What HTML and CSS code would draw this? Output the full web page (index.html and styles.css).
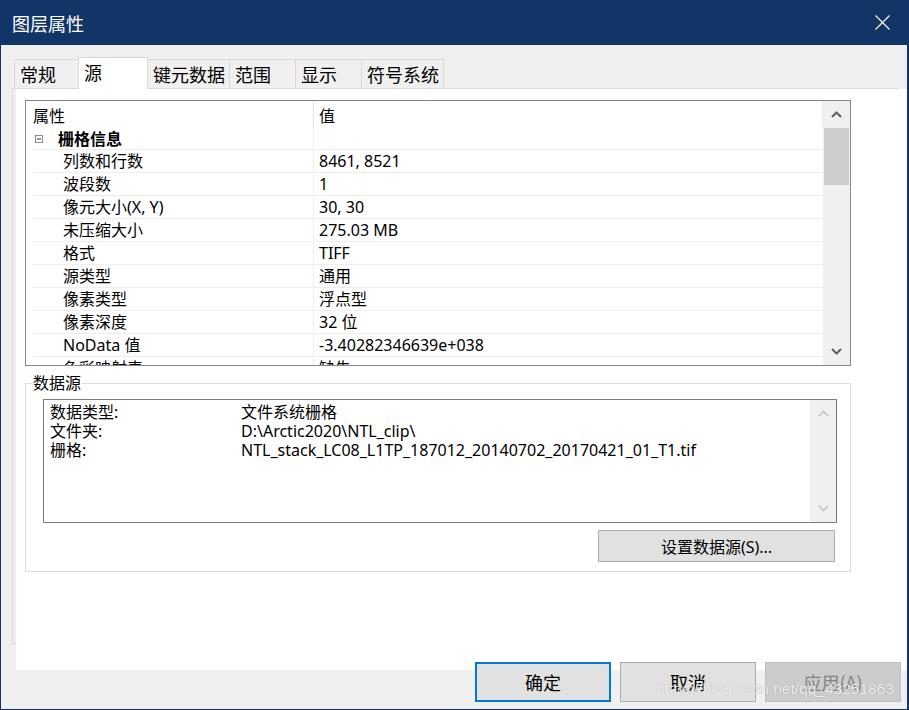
FILE: index.html
```html
<!DOCTYPE html>
<html lang="zh-CN">
<head>
<meta charset="utf-8">
<title>图层属性</title>
<link rel="stylesheet" href="styles.css">
</head>
<body>
<div class="dialog">
  <div class="titlebar">
    <span class="title">图层属性</span>
    <svg class="close" width="15" height="15" viewBox="0 0 15 15"><path d="M0.5 0.5 L14.5 14.5 M14.5 0.5 L0.5 14.5" stroke="#fff" stroke-width="1.1" fill="none"/></svg>
  </div>
  <div class="tabs">
    <div class="tab t1">常规</div>
    <div class="tab active t2">源</div>
    <div class="tab t3">键元数据</div>
    <div class="tab t4">范围</div>
    <div class="tab t5">显示</div>
    <div class="tab t6">符号系统</div>
  </div>
  <div class="sheet">
    <div class="grid">
      <div class="list">
        <div class="head"><div class="c1">属性</div><div class="c2">值</div></div>
        <div class="row grp"><div class="c1"><svg class="minus" width="8" height="8" viewBox="0 0 8 8"><rect x="0.5" y="0.5" width="7" height="7" fill="#fff" stroke="#8c8c8c"/><path d="M2 4 H6" stroke="#333"/></svg><b>栅格信息</b></div><div class="c2"></div></div>
        <div class="row"><div class="c1">列数和行数</div><div class="c2">8461, 8521</div></div>
        <div class="row"><div class="c1">波段数</div><div class="c2">1</div></div>
        <div class="row"><div class="c1">像元大小(X, Y)</div><div class="c2">30, 30</div></div>
        <div class="row"><div class="c1">未压缩大小</div><div class="c2">275.03 MB</div></div>
        <div class="row"><div class="c1">格式</div><div class="c2">TIFF</div></div>
        <div class="row"><div class="c1">源类型</div><div class="c2">通用</div></div>
        <div class="row"><div class="c1">像素类型</div><div class="c2">浮点型</div></div>
        <div class="row"><div class="c1">像素深度</div><div class="c2">32 位</div></div>
        <div class="row"><div class="c1">NoData 值</div><div class="c2">-3.40282346639e+038</div></div>
        <div class="row"><div class="c1">色彩映射表</div><div class="c2">缺失</div></div>
      </div>
      <div class="vscroll">
        <div class="arrow"><svg width="11" height="7" viewBox="0 0 11 7"><path d="M1 6 L5.5 1.5 L10 6" stroke="#606060" stroke-width="2" fill="none"/></svg></div>
        <div class="thumb"></div>
        <div class="track"></div>
        <div class="arrow"><svg width="11" height="7" viewBox="0 0 11 7"><path d="M1 1 L5.5 5.5 L10 1" stroke="#606060" stroke-width="2" fill="none"/></svg></div>
      </div>
    </div>
    <div class="groupbox">
      <span class="legend">数据源</span>
      <div class="textbox">
        <div class="tb-content">
          <div class="tb-line"><span class="tb-label">数据类型:</span><span>文件系统栅格</span></div>
          <div class="tb-line"><span class="tb-label">文件夹:</span><span>D:\Arctic2020\NTL_clip\</span></div>
          <div class="tb-line"><span class="tb-label">栅格:</span><span>NTL_stack_LC08_L1TP_187012_20140702_20170421_01_T1.tif</span></div>
        </div>
        <div class="vscroll small">
          <div class="arrow"><svg width="11" height="7" viewBox="0 0 11 7"><path d="M1 6 L5.5 1.5 L10 6" stroke="#c2c2c2" stroke-width="1.5" fill="none"/></svg></div>
          <div class="track"></div>
          <div class="arrow"><svg width="11" height="7" viewBox="0 0 11 7"><path d="M1 1 L5.5 5.5 L10 1" stroke="#c2c2c2" stroke-width="1.5" fill="none"/></svg></div>
        </div>
      </div>
      <div class="btnrow"><button class="btn set">设置数据源(S)...</button></div>
    </div>
  </div>
  <div class="footer">
    <button class="btn big default">确定</button>
    <button class="btn big">取消</button>
    <button class="btn big disabled">应用(A)</button>
  </div>
  <div class="watermark">https://blog.csdn.net/qq_43251863</div>
</div>
</body>
</html>
```
FILE: styles.css
```css
* { box-sizing: border-box; }
html, body { margin: 0; padding: 0; }
body {
  background: #f0f0f0;
  font-family: "Noto Sans", "Noto Sans CJK SC", sans-serif;
  font-size: 16px;
  color: #000;
}
.dialog {
  position: relative;
  z-index: 0;
  width: 909px;
  height: 710px;
  background: #f0f0f0;
  border-left: 1px solid #123568;
  border-right: 2px solid #123568;
  border-bottom: 1px solid #123568;
  overflow: hidden;
}
.titlebar {
  height: 45px;
  background: #123568;
  display: flex;
  align-items: center;
  justify-content: space-between;
  padding: 0 17px 0 11px;
}
.title {
  color: #fff;
  font-size: 18px;
  font-family: "Noto Sans CJK SC", sans-serif;
  line-height: 20px;
}
.close { display: block; }
.tabs {
  height: 43px;
  padding-left: 13px;
  display: flex;
  align-items: flex-end;
}
.tab {
  height: 29px;
  border: 1px solid #d9d9d9;
  border-bottom: none;
  background: #f0f0f0;
  font-size: 18px;
  line-height: 26px;
  padding: 1px 0 0 5px;
  white-space: nowrap;
  margin-left: -1px;
  font-family: "Noto Sans CJK SC", sans-serif;
}
.t1 { width: 65px; margin-left: 0; }
.t2 { width: 70px; }
.t3 { width: 83px; }
.t4 { width: 67px; }
.t5 { width: 67px; }
.t6 { width: 83px; }
.tab.active {
  height: 32px;
  margin-bottom: -1px;
  background: #fff;
  padding-top: 0;
  line-height: 29px;
}
.sheet {
  position: relative;
  margin: 1px 0 0 15px;
  width: 891px;
  height: 581px;
  background: #fff;
  padding: 11px 0 0 9px;
}
.sheet::before {
  content: "";
  position: absolute;
  left: -4px;
  top: -1px;
  width: 884px;
  height: 554px;
  border: 1px solid #d9d9d9;
  z-index: -1;
}
.grid {
  width: 826px;
  height: 266px;
  border: 1px solid #828790;
  display: flex;
}
.list {
  width: 797px;
  overflow: hidden;
  padding-left: 7px;
}
.head {
  height: 26px;
  display: flex;
  border-right: 1px solid #e8e8e8;
}
.head .c1 {
  width: 281px;
  border-right: 1px solid #e3e3e3;
  line-height: 26px;
  padding-top: 2px;
}
.head .c2 { padding-left: 5px; line-height: 26px; padding-top: 2px; }
.row {
  height: 23px;
  display: flex;
  border-bottom: 1px solid #eeeeee;
  line-height: 21px;
  padding-top: 1px;
  white-space: nowrap;
}
.row .c1 {
  width: 281px;
  border-right: 1px solid #eeeeee;
  padding-left: 30px;
}
.row .c2 { padding-left: 5px; }
.row.grp .c1 {
  padding-left: 2px;
  display: flex;
  align-items: center;
}
.minus { display: block; margin-right: 15px; }
.row.grp b { font-weight: bold; font-family: "Noto Sans CJK SC", sans-serif; }
.vscroll {
  width: 27px;
  background: #f0f0f0;
  display: flex;
  flex-direction: column;
}
.vscroll .arrow {
  height: 27px;
  display: flex;
  align-items: center;
  justify-content: center;
}
.vscroll .arrow svg { display: block; }
.vscroll .thumb {
  height: 57px;
  margin: 0 1px;
  background: #cdcdcd;
}
.vscroll .track { flex: 1; }
.groupbox {
  position: relative;
  margin-top: 17px;
  width: 826px;
  height: 189px;
  border: 1px solid #dcdcdc;
  padding: 15px 13px 0 17px;
}
.legend {
  position: absolute;
  left: 6px;
  top: -11px;
  height: 20px;
  line-height: 20px;
  background: #fff;
  padding: 0 1px;
}
.textbox {
  width: 794px;
  height: 124px;
  border: 1px solid #7a7a7a;
  display: flex;
}
.tb-content {
  flex: 1;
  padding: 3px 0 0 6px;
}
.tb-line {
  display: flex;
  line-height: 19px;
  height: 19px;
  white-space: nowrap;
}
.tb-label { width: 191px; }
.vscroll.small { width: 26px; }
.btnrow {
  display: flex;
  justify-content: flex-end;
  margin-top: 7px;
  padding-right: 2px;
}
.btn {
  font-family: "Noto Sans", "Noto Sans CJK SC", sans-serif;
  font-size: 16px;
  color: #000;
  background: #e1e1e1;
  border: 1px solid #adadad;
  padding: 0;
  margin: 0;
}
.btn.set { width: 237px; height: 32px; }
.footer {
  position: relative;
  z-index: 1;
  margin-top: -8px;
  padding-right: 6px;
  display: flex;
  justify-content: flex-end;
  gap: 9px;
}
.btn.big {
  width: 136px;
  height: 40px;
  font-size: 18px;
  font-family: "Noto Sans CJK SC", sans-serif;
}
.btn.default { border: 2px solid #0078d7; }
.btn.disabled {
  background: #cccccc;
  border-color: #bfbfbf;
  color: #838383;
}
.watermark {
  position: absolute;
  left: 655px;
  top: 680px;
  z-index: 2;
  font-family: "Liberation Sans", sans-serif;
  font-size: 15.5px;
  line-height: 18px;
  color: rgba(255, 255, 255, 0.85);
  text-shadow: 0 0 1px rgba(90, 90, 90, 0.5);
  white-space: nowrap;
}
```
